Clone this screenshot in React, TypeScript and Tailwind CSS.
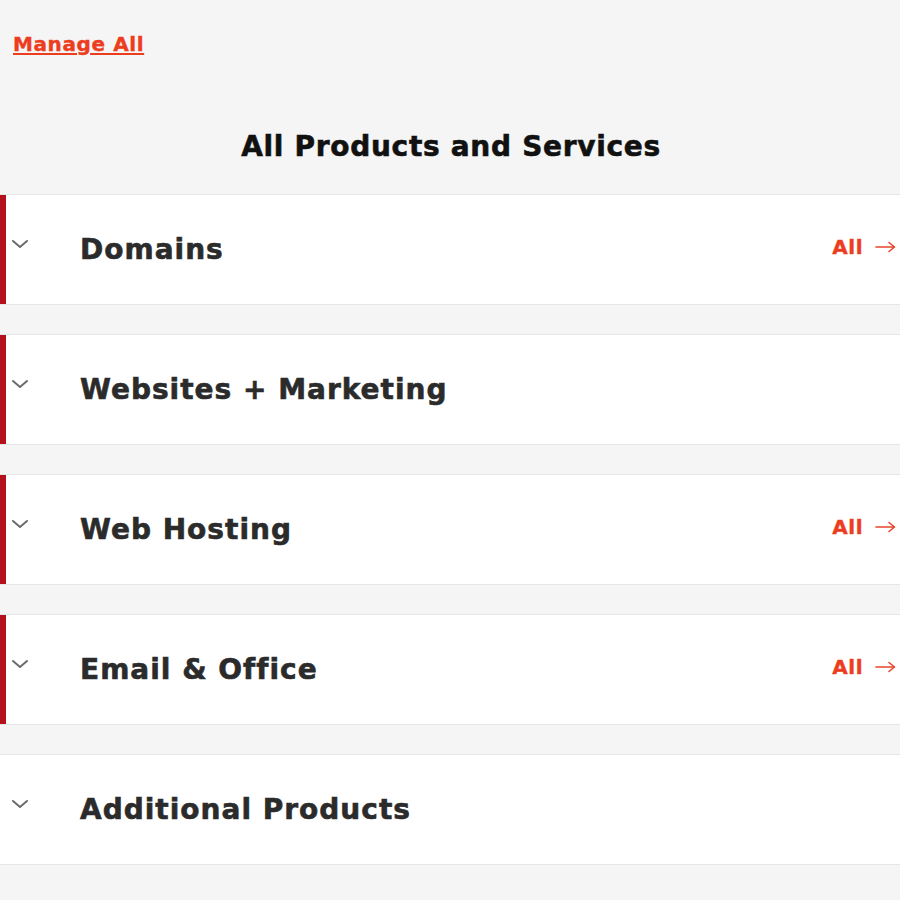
import React from "react";

const items = [
  { title: "Domains", bar: true, all: true },
  { title: "Websites + Marketing", bar: true, all: false },
  { title: "Web Hosting", bar: true, all: true },
  { title: "Email & Office", bar: true, all: true },
  { title: "Additional Products", bar: false, all: false },
];

function Chevron() {
  return (
    <svg width="18" height="10" viewBox="0 0 18 10" className="block">
      <polyline points="2,2 9,8 16,2" fill="none" stroke="#6b6b6b" strokeWidth="2" strokeLinecap="round" strokeLinejoin="round" />
    </svg>
  );
}

function Arrow() {
  return (
    <svg width="22" height="12" viewBox="0 0 22 12" className="block">
      <line x1="1" y1="6" x2="19" y2="6" stroke="#e8452c" strokeWidth="1.6" strokeLinecap="round" />
      <polyline points="14,1.5 19.5,6 14,10.5" fill="none" stroke="#e8452c" strokeWidth="1.6" strokeLinecap="round" strokeLinejoin="round" />
    </svg>
  );
}

export default function App() {
  return (
    <div className="min-h-[900px] w-[900px] bg-[#f5f5f5] font-['DejaVu_Sans',sans-serif] overflow-hidden">
      <div className="h-[194px] flex flex-col">
        <div className="pl-[13px] pt-[31px]">
          <a className="text-[20px] font-bold text-[#ec3d1f] underline underline-offset-[2px] decoration-[2px] tracking-[0.6px] leading-[26px] [-webkit-text-stroke:0.4px_#ec3d1f]">
            Manage All
          </a>
        </div>
        <h2 className="mt-[72px] text-center text-[28px] font-bold text-[#111111] tracking-[0.7px] leading-[34px] pl-[2px] [-webkit-text-stroke:0.6px_#111111]">
          All Products and Services
        </h2>
      </div>
      <div className="flex flex-col gap-[29px]">
        {items.map((it) => (
          <div
            key={it.title}
            className="h-[111px] bg-white border-y border-[#e6e6e6] flex items-stretch"
          >
            <div className={`w-[6px] shrink-0 ${it.bar ? "bg-[#b3121d]" : "bg-white"}`} />
            <div className="flex-1 flex items-center">
              <div className="w-[74px] shrink-0 pl-[5px] -mt-[11px]">
                <Chevron />
              </div>
              <div className="flex-1 text-[28px] font-bold text-[#2b2b2b] tracking-[1px] leading-[34px] [-webkit-text-stroke:0.6px_#2b2b2b]">
                {it.title}
              </div>
              {it.all && (
                <div className="flex items-center gap-[12px] pr-[3px] -mt-[5px]">
                  <span className="text-[20px] font-bold text-[#ec3d1f] tracking-[0.5px] [-webkit-text-stroke:0.4px_#ec3d1f]">All</span>
                  <Arrow />
                </div>
              )}
            </div>
          </div>
        ))}
      </div>
    </div>
  );
}
